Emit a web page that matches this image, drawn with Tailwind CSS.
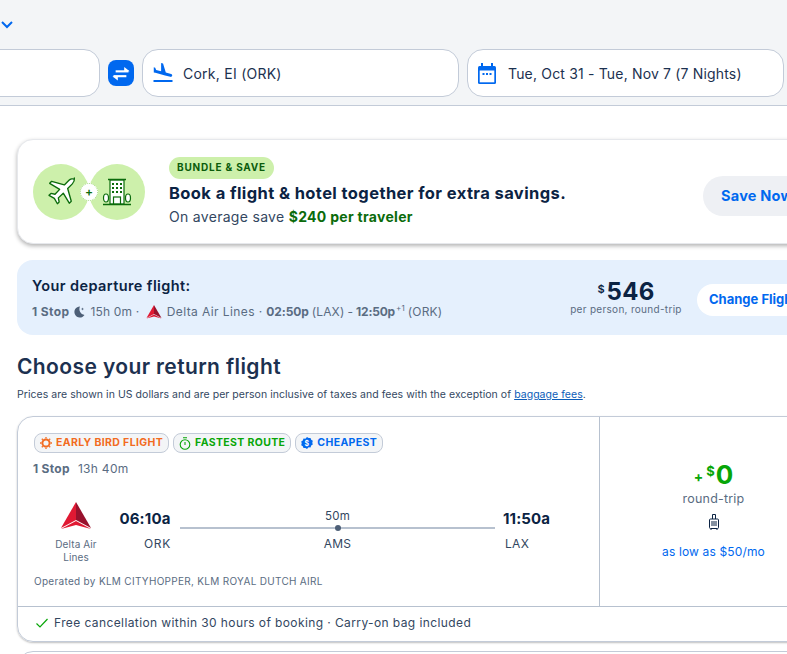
<!DOCTYPE html>
<html><head><meta charset="utf-8"><script src="https://cdn.jsdelivr.net/npm/@tailwindcss/browser@4"></script></head>
<body class="bg-white">
<div class="w-[787px] h-[654px] overflow-hidden bg-white font-['Inter','Liberation_Sans',sans-serif] text-[#0b2343]">
  <!-- top bar -->
  <div class="h-[106px] bg-[#f3f5f7] border-b border-[#c3cbd8] flex flex-col">
    <div class="h-[49px] pt-[20px] pl-[1px]">
      <svg width="13" height="10" viewBox="0 0 13 10" fill="none" stroke="#0068ef" stroke-width="2"><path d="M1 2 L6 7 L11 2"/></svg>
    </div>
    <div class="flex items-center ml-[-100px] gap-2">
      <div class="w-[200px] h-[48px] bg-white border border-[#c3cbd8] rounded-2xl shrink-0"></div>
      <div class="w-[26px] h-[26px] bg-[#0068ef] rounded-lg shrink-0 flex items-center justify-center">
        <svg width="22" height="15" viewBox="0 0 20 14" fill="none" stroke="#fff" stroke-width="2"><path d="M5 5 H17"/><path d="M13 1 L18 5 L13 5" fill="#fff" stroke="none"/><path d="M15 9.500 H3"/><path d="M7 13.500 L2 9.500 L7 9.500" fill="#fff" stroke="none"/></svg>
      </div>
      <div class="w-[317px] h-[48px] bg-white border border-[#c3cbd8] rounded-2xl shrink-0 flex items-center pl-[8px]">
        <svg width="24" height="24" viewBox="0 0 24 24" fill="#0068ef"><path d="M2.500 19h19v2h-19zm7.180-5.730l4.350 1.160 5.310 1.420c.8.210 1.620-.260 1.840-1.060.210-.8-.260-1.620-1.060-1.840l-5.310-1.420-2.760-9.020L10.120 2v8.280L5.150 8.950l-.93-2.320-1.450-.39v5.170l1.600.43 5.310 1.430z"/></svg>
        <span class="ml-[8px] text-[14px] tracking-[0.25px] text-[#1c3150]">Cork, EI (ORK)</span>
      </div>
      <div class="w-[317px] h-[48px] bg-white border border-[#c3cbd8] rounded-2xl shrink-0 flex items-center pl-[10px]">
        <svg width="18" height="21" viewBox="0 0 18 21"><rect x="3" y="0" width="2" height="4" fill="#0068ef"/><rect x="13" y="0" width="2" height="4" fill="#0068ef"/><rect x="0" y="3" width="18" height="18" rx="1.500" fill="#0068ef"/><rect x="1.700" y="7.500" width="14.600" height="11.800" fill="#fff"/><rect x="4.500" y="10" width="2" height="2" fill="#0068ef"/><rect x="8" y="10" width="2" height="2" fill="#0068ef"/><rect x="11.500" y="10" width="2" height="2" fill="#0068ef"/></svg>
        <span class="ml-[12px] text-[14px] tracking-[0.17px] text-[#1c3150]">Tue, Oct 31 - Tue, Nov 7 (7 Nights)</span>
      </div>
    </div>
  </div>

  <div class="pl-[17px] w-[900px]">
    <!-- bundle -->
    <div class="mt-[33px] h-[105px] bg-white border border-[#e6e8ec] rounded-2xl shadow-[0_2px_4px_rgba(0,0,0,0.3)] flex items-center pl-[15px]">
      <div class="relative flex w-[112px] h-[56px] shrink-0">
        <div class="w-[56px] h-[56px] rounded-full bg-[#cdf0ab] flex items-center justify-center">
          <svg width="32" height="32" viewBox="0 0 24 24" fill="#fff" stroke="#0b6b0b" stroke-width="1" stroke-linejoin="round"><path d="M22 2.500c-1-.8-3-.3-4 .7l-3.500 3.500L5 4 3.500 5.500l7.500 4.500-3.500 3.700-3-.6L3 14.500l4 2.300 2.300 4 1.300-1.300-.6-3.100 3.700-3.500 4.500 7.500 1.500-1.500-2.700-9.500 3.500-3.500c1-1 1.700-2.900 1.500-4.400z"/></svg>
        </div>
        <div class="w-[56px] h-[56px] rounded-full bg-[#cdf0ab] flex items-center justify-center">
          <svg width="32" height="32" viewBox="0 0 32 32" fill="#fff" stroke="#0b6b0b" stroke-width="1.200"><rect x="9" y="4" width="14" height="24"/><path d="M7 3.500H25" stroke-width="1.500"/><g fill="#0b6b0b" stroke="none"><rect x="11" y="7" width="2" height="2"/><rect x="15" y="7" width="2" height="2"/><rect x="19" y="7" width="2" height="2"/><rect x="11" y="11" width="2" height="2"/><rect x="15" y="11" width="2" height="2"/><rect x="19" y="11" width="2" height="2"/><rect x="11" y="15" width="2" height="2"/><rect x="15" y="15" width="2" height="2"/><rect x="19" y="15" width="2" height="2"/></g><rect x="12.500" y="21" width="7" height="7"/><ellipse cx="5" cy="22" rx="2.500" ry="4"/><ellipse cx="27" cy="22" rx="2.500" ry="4"/><path d="M2 28.500H30" stroke-width="1.500"/></svg>
        </div>
        <div class="absolute left-[47px] top-[19px] w-[18px] h-[18px] rounded-full bg-white border border-dotted border-[#a9d98c] flex items-center justify-center text-[12px] font-semibold leading-none text-[#0b6b0b]">+</div>
      </div>
      <div class="ml-[24px] flex flex-col items-start">
        <div class="h-[22px] px-[8px] rounded-full bg-[#cdf0ab] text-[#0b5c0b] text-[10px] font-bold tracking-[0.8px] flex items-center">BUNDLE &amp; SAVE</div>
        <div class="mt-[3px] text-[16.500px] leading-[22px] font-bold tracking-[0.4px] text-[#0b2343]">Book a flight &amp; hotel together for extra savings.</div>
        <div class="mt-[3px] text-[14px] leading-[20px] tracking-[0.3px] text-[#33475f]">On average save <span class="font-bold text-[#0b6b0b]">$240 per traveler</span></div>
      </div>
      <div class="ml-[137px] mt-[8px] h-[40px] w-[150px] rounded-full bg-[#eef0f4] text-[#0068ef] text-[14.500px] font-bold flex items-center pl-[18px] tracking-[0.2px]">Save Now</div>
    </div>

    <!-- departure -->
    <div class="mt-[16px] h-[75px] bg-[#e5f0fd] rounded-2xl flex items-center pl-[15px]">
      <div class="w-[528px] shrink-0">
        <div class="text-[14.500px] leading-[20px] font-semibold tracking-[0.4px] text-[#0b2343]">Your departure flight:</div>
        <div class="mt-[8px] flex items-center text-[12px] leading-[16px] tracking-[0.15px] text-[#5a6c82]">
          <span class="font-bold tracking-[0.4px]">1 Stop</span>
          <svg class="ml-[4px]" width="12" height="12" viewBox="0 0 12 12" fill="#4d5f77"><path d="M7 .5a5.500 5.500 0 1 0 4.500 8.500A6 6 0 0 1 7 .5z"/><path d="M9.500 1.500l.4 1.100 1.100.4-1.100.4-.4 1.100-.4-1.100-1.100-.4 1.100-.4z"/></svg>
          <span class="ml-[5px]">15h 0m&nbsp;·&nbsp;</span>
          <svg class="ml-[3px]" width="16" height="14" viewBox="0 0 32 28"><path d="M16 0 L1 26 L16 18z" fill="#e01933"/><path d="M16 0 L31 26 L16 18z" fill="#98122d"/><path d="M1 27 L16 19 L31 27 L16 23z" fill="#e01933"/></svg>
          <span class="ml-[5px] tracking-[0.4px]">Delta Air Lines&nbsp;·&nbsp;</span>
          <span class="font-bold tracking-[-0.1px]">02:50p</span><span class="ml-[3px]">(LAX)</span><span class="ml-[3px]">-</span><span class="ml-[3px] font-bold tracking-[-0.2px]">12:50p</span><sup class="text-[8px] ml-[1px] leading-none">+1</sup><span class="ml-[3px]">(ORK)</span>
        </div>
      </div>
      <div class="w-[128px] shrink-0 flex flex-col items-center text-center mr-[-1px] ml-[2px]">
        <div class="flex items-start leading-[23px] text-[#0b2343]"><span class="text-[11px] font-semibold leading-[18px] mr-[2px]">$</span><span class="text-[24px] font-bold tracking-[0.3px]">546</span></div>
        <div class="text-[10px] leading-[12px] tracking-[0.3px] text-[#5a6c82]">per person, round-trip</div>
      </div>
      <div class="ml-[8px] mt-[4px] h-[32px] w-[140px] rounded-full bg-white text-[#0068ef] text-[13px] font-bold flex items-center pl-[12px]">Change Flight</div>
    </div>

    <h1 class="mt-[18px] text-[21px] leading-[28px] font-semibold tracking-[0.39px] text-[#1c3150]">Choose your return flight</h1>
    <p class="mt-[7px] text-[10.500px] leading-[14px] tracking-[0.045px] text-[#33475f]">Prices are shown in US dollars and are per person inclusive of taxes and fees with the exception of <span class="underline text-[#0b5cb8]">baggage fees</span>.</p>

    <!-- result -->
    <div class="mt-[14px] h-[226px] border border-[#c3cbd8] rounded-2xl shadow-[0_1px_2px_rgba(0,0,0,0.25)] flex flex-col">
      <div class="h-[189px] flex">
        <div class="w-[582px] shrink-0 border-r border-[#b7c1cf] pl-[16px] pt-[16px]">
          <div class="flex gap-[4px] text-[10.500px] font-bold tracking-[0.36px]">
            <div class="h-[20px] px-[5px] rounded-lg bg-[#f3f5f7] border border-[#c3cbd8] flex items-center gap-[4px] text-[#f26b21]">
              <svg width="12" height="12" viewBox="0 0 12 12" fill="none" stroke="#f26b21" stroke-width="2"><circle cx="6" cy="6" r="3.600"/><path d="M6 0v1.500M6 10.500V12M0 6h1.500M10.500 6H12M1.800 1.800l1 1M9.200 9.200l1 1M1.800 10.200l1-1M9.200 2.800l1-1" stroke-width="1.300"/></svg>EARLY BIRD FLIGHT</div>
            <div class="h-[20px] px-[5px] rounded-lg bg-[#f3f5f7] border border-[#c3cbd8] flex items-center gap-[4px] text-[#08a608]">
              <svg width="12" height="13" viewBox="0 0 12 13" fill="none" stroke="#08a608" stroke-width="1.100"><circle cx="6" cy="7.500" r="4.800"/><path d="M4 .8h4M6 5v3"/></svg>FASTEST ROUTE</div>
            <div class="h-[20px] px-[5px] rounded-lg bg-[#f3f5f7] border border-[#c3cbd8] flex items-center gap-[4px] text-[#0068ef]">
              <svg width="12" height="12" viewBox="0 0 12 12"><path d="M6 0l1.600 1.100 1.900-.1.700 1.800 1.600 1-.5 1.900.5 1.900-1.600 1-.7 1.800-1.900-.1L6 12l-1.600-1.100-1.900.1-.7-1.800-1.600-1 .5-1.900L.2 4.400l1.600-1 .7-1.800 1.900.1z" fill="#0068ef"/><text x="6" y="8.600" text-anchor="middle" font-size="7" font-weight="700" fill="#fff">$</text></svg>CHEAPEST</div>
          </div>
          <div class="mt-[8px] -ml-[1px] text-[12px] leading-[16px] tracking-[0.3px] text-[#5a6c82]"><span class="font-bold">1 Stop</span><span class="ml-[8px]">13h 40m</span></div>
          <div class="flex mt-[29px]">
            <div class="w-[64px] ml-[10px] shrink-0 flex flex-col items-center text-center -mt-[4px]">
              <svg width="32" height="28" viewBox="0 0 32 28"><path d="M16 0 L1 26 L16 18z" fill="#e01933"/><path d="M16 0 L31 26 L16 18z" fill="#98122d"/><path d="M1 27 L16 19 L31 27 L16 23z" fill="#e01933"/></svg>
              <div class="mt-[8px] text-[10px] leading-[13px] tracking-[0.1px] text-[#5a6c82]">Delta Air<br>Lines</div>
            </div>
            <div class="ml-[10px] w-[54px] shrink-0 pt-[3px]">
              <div class="text-[15px] leading-[20px] font-bold text-[#0b2343] tracking-[0.15px] text-center">06:10a</div>
              <div class="mt-[7px] pr-[1px] text-[12px] leading-[16px] tracking-[0.7px] text-[#33475f] text-right">ORK</div>
            </div>
            <div class="w-[315px] ml-[8px] shrink-0 text-center pt-[3px]">
              <div class="text-[11.500px] leading-[14px] text-[#33475f] tracking-[0.2px]">50m</div>
              <div class="relative h-[2px] mt-[4px] bg-[#b7c1cf]"><div class="absolute left-1/2 -ml-[3px] -top-[2px] w-[6px] h-[6px] rounded-full bg-[#4d5f77]"></div></div>
              <div class="mt-[7px] text-[12px] leading-[16px] tracking-[0.3px] text-[#33475f]">AMS</div>
            </div>
            <div class="ml-[8px] w-[54px] shrink-0 pt-[3px]">
              <div class="text-[15px] leading-[20px] font-bold text-[#0b2343] tracking-[0.1px] text-left">11:50a</div>
              <div class="mt-[7px] pl-[2px] text-[12px] leading-[16px] tracking-[0.3px] text-[#33475f] text-left">LAX</div>
            </div>
          </div>
          <div class="mt-[10px] text-[10px] leading-[14px] tracking-[0.3px] text-[#5a6c82]">Operated by KLM CITYHOPPER, KLM ROYAL DUTCH AIRL</div>
        </div>
        <div class="w-[227px] shrink-0 flex flex-col items-center pt-[44px] text-center">
          <div class="flex items-start text-[#08a608] font-bold leading-[28px]"><span class="text-[14px] mt-[2px] mr-[3px]">+</span><span class="text-[13px] leading-[20px] mr-[1px]">$</span><span class="text-[26px]">0</span></div>
          <div class="text-[12.500px] leading-[16px] tracking-[0.2px] text-[#5a6c82]">round-trip</div>
          <svg class="mt-[6px]" width="14" height="18" viewBox="0 0 14 18" fill="none" stroke="#0b2343" stroke-width="1"><rect x="2.500" y="6" width="9" height="9.500" rx="1"/><path d="M5.500 6V1.500h3V6M5 8v5M7 8v5M9 8v5M4 16v1M10 16v1"/></svg>
          <div class="mt-[13px] text-[12px] leading-[16px] tracking-[0.15px] text-[#0068ef]">as low as $50/mo</div>
        </div>
      </div>
      <div class="border-t border-[#b7c1cf] h-[35px] flex items-center pl-[17px] pb-[2px] text-[12px] tracking-[0.4px] text-[#33475f]">
        <svg width="14" height="12" viewBox="0 0 14 12" fill="none" stroke="#08a608" stroke-width="1.200"><path d="M1.500 6.500L5 10 12.500 2"/></svg>
        <span class="ml-[5px]">Free cancellation within 30 hours of booking · Carry-on bag included</span>
      </div>
    </div>
    <div class="mt-[9px] h-[60px] border border-[#c3cbd8] rounded-2xl"></div>
  </div>
</div>
</body></html>
